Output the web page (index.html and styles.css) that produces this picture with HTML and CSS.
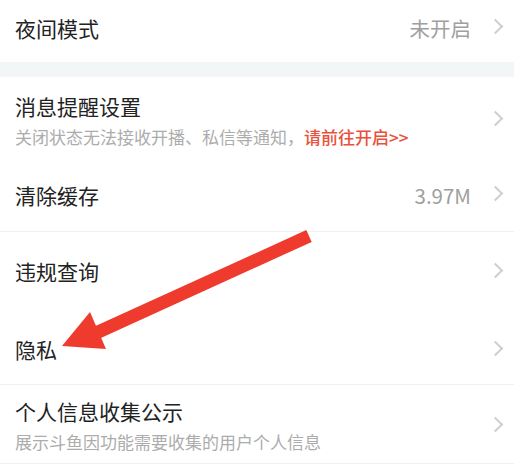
FILE: index.html
```html
<!DOCTYPE html>
<html lang="zh-CN">
<head>
<meta charset="UTF-8">
<meta name="viewport" content="width=device-width, initial-scale=1.0">
<title>设置</title>
<link rel="stylesheet" href="styles.css">
</head>
<body>
    <div class="page">
        <div class="row row-night">
            <div class="row-main">
                <div class="title">夜间模式</div>
            </div>
            <span class="value">未开启</span>
            <span class="chevron"></span>
        </div>

        <div class="band"></div>

        <div class="row row-notify">
            <div class="row-main">
                <div class="title">消息提醒设置</div>
                <div class="sub">关闭状态无法接收开播、私信等通知，<span class="link">请前往开启&gt;&gt;</span></div>
            </div>
            <span class="chevron"></span>
        </div>

        <div class="row row-cache line">
            <div class="row-main">
                <div class="title">清除缓存</div>
            </div>
            <span class="value">3.97M</span>
            <span class="chevron"></span>
        </div>

        <div class="row row-violation">
            <div class="row-main">
                <div class="title">违规查询</div>
            </div>
            <span class="chevron"></span>
        </div>

        <div class="row row-privacy line">
            <div class="row-main">
                <div class="title">隐私</div>
            </div>
            <span class="chevron"></span>
        </div>

        <div class="row row-info line">
            <div class="row-main">
                <div class="title">个人信息收集公示</div>
                <div class="sub">展示斗鱼因功能需要收集的用户个人信息</div>
            </div>
            <span class="chevron"></span>
        </div>

        <svg class="arrow" width="514" height="470" viewBox="0 0 514 470">
            <line x1="309" y1="236" x2="96" y2="333" stroke="#ef3a2e" stroke-width="13" stroke-linecap="butt"/>
            <polygon points="62,346 90,312 106,349" fill="#ef3a2e"/>
        </svg>
    </div>
</body>
</html>
```

FILE: styles.css
```css
body {
    margin: 0;
    padding: 0;
    background-color: #fff;
    font-family: "Noto Sans CJK SC", "Noto Sans", sans-serif;
}
.page {
    position: relative;
    width: 514px;
    height: 470px;
    overflow: hidden;
    background-color: #fff;
}
.row {
    display: flex;
    align-items: center;
    padding: 0 11px 0 15px;
    box-sizing: border-box;
}
.row.line {
    border-bottom: 1px solid #f1f1f1;
}
.row-main {
    flex: 1;
}
.title {
    font-size: 21px;
    color: #222;
    line-height: 28px;
}
.sub {
    font-size: 17px;
    color: #acacac;
    line-height: 22px;
    margin-top: 6px;
}
.link {
    color: #e8523c;
    font-weight: 500;
}
.value {
    font-size: 20.5px;
    color: #a0a0a0;
    margin-right: 22px;
}
.chevron {
    width: 10px;
    height: 19px;
    position: relative;
}
.chevron::before {
    content: "";
    position: absolute;
    left: -3px;
    top: 3px;
    width: 11px;
    height: 11px;
    border-top: 2px solid #cfcfcf;
    border-right: 2px solid #cfcfcf;
    transform: rotate(45deg);
    box-sizing: border-box;
}
.row-night {
    height: 62px;
    padding-bottom: 7px;
}
.band {
    height: 15px;
    background-color: #f3f6f7;
}
.row-notify {
    height: 81px;
    padding-top: 4px;
}
.row-cache {
    height: 74px;
}
.row-violation {
    height: 78px;
}
.row-privacy {
    height: 75px;
    padding-top: 4px;
}
.row-info {
    height: 79px;
    padding-top: 2px;
}
.arrow {
    position: absolute;
    left: 0;
    top: 0;
    pointer-events: none;
}
```
